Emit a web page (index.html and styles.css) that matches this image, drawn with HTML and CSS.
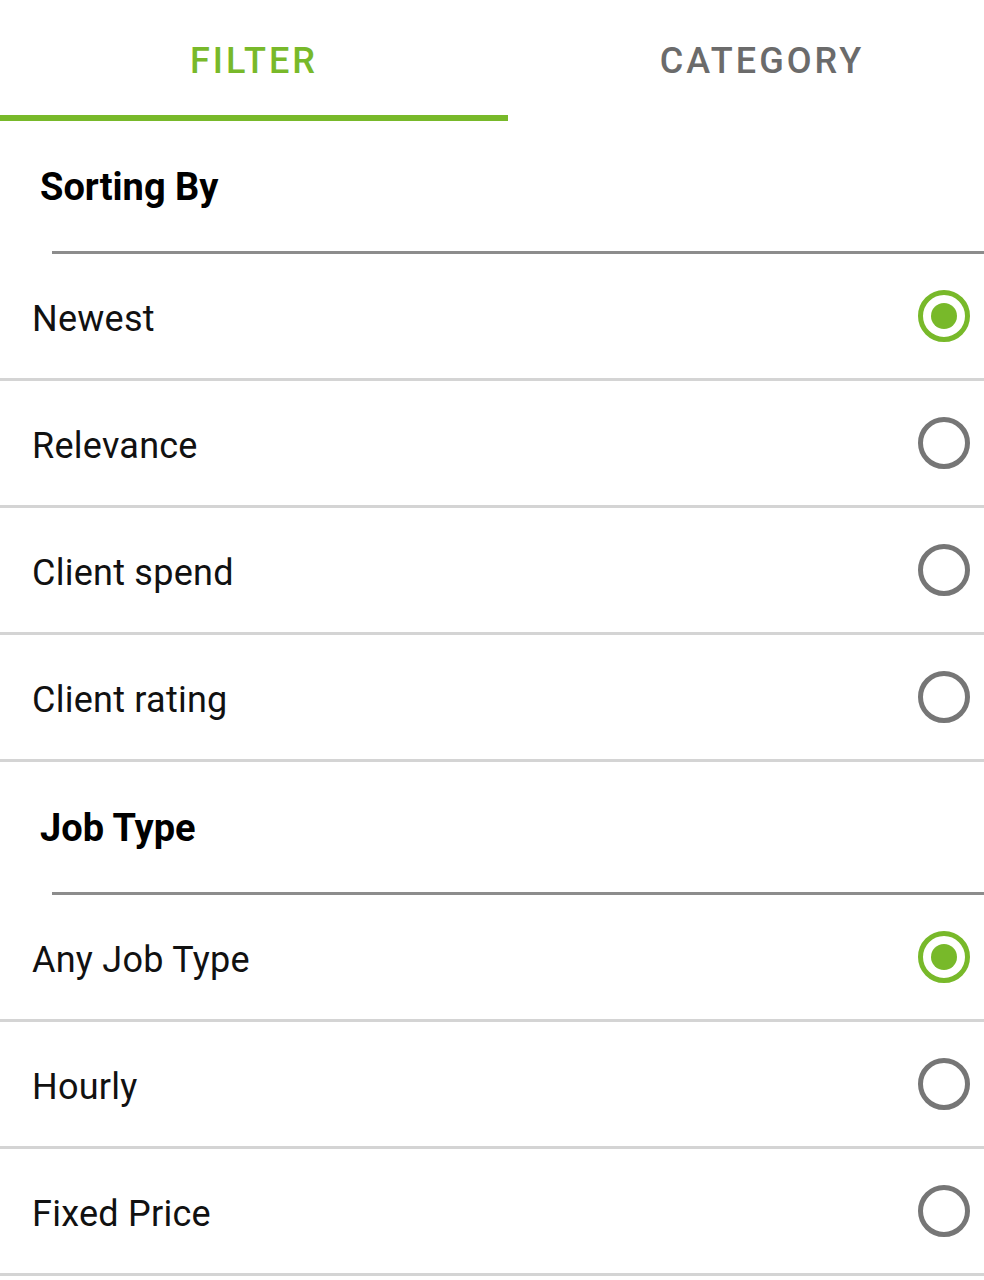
FILE: index.html
```html
<!DOCTYPE html>
<html>
<head>
<meta charset="utf-8">
<link rel="stylesheet" href="styles.css">
</head>
<body>
<div class="screen">
  <div class="tabs">
    <div class="tab active">FILTER</div>
    <div class="tab">CATEGORY</div>
  </div>

  <div class="section-title">Sorting By</div>
  <div class="section-rule"></div>
  <div class="row"><span class="label">Newest</span><span class="radio checked"></span></div>
  <div class="row"><span class="label">Relevance</span><span class="radio"></span></div>
  <div class="row"><span class="label">Client spend</span><span class="radio"></span></div>
  <div class="row"><span class="label">Client rating</span><span class="radio"></span></div>

  <div class="section-title">Job Type</div>
  <div class="section-rule"></div>
  <div class="row"><span class="label">Any Job Type</span><span class="radio checked"></span></div>
  <div class="row"><span class="label">Hourly</span><span class="radio"></span></div>
  <div class="row"><span class="label">Fixed Price</span><span class="radio"></span></div>
</div>
</body>
</html>
```

FILE: styles.css
```css
html, body {
  margin: 0;
  padding: 0;
  background: #ffffff;
}
body {
  font-family: Roboto, "Liberation Sans", sans-serif;
  overflow: hidden;
}
.screen {
  width: 984px;
  overflow: hidden;
}
.tabs {
  display: grid;
  grid-template-columns: 508px 508px;
  height: 121px;
}
.tab {
  display: flex;
  align-items: center;
  justify-content: center;
  padding-top: 7px;
  font-size: 36px;
  font-weight: 500;
  letter-spacing: 3px;
  color: #6b6b6b;
  box-sizing: border-box;
  border-bottom: 6px solid transparent;
}
.tab.active {
  color: #78b92a;
  border-bottom-color: #78b92a;
}
.section-title {
  height: 130px;
  display: flex;
  align-items: center;
  padding-left: 40px;
  padding-top: 2px;
  box-sizing: border-box;
  font-size: 38px;
  font-weight: 700;
  color: #000000;
}
.section-rule {
  margin-left: 52px;
  height: 3px;
  background: #8c8c8c;
}
.row {
  height: 127px;
  box-sizing: border-box;
  border-bottom: 3px solid #d4d4d4;
  display: flex;
  align-items: center;
  justify-content: space-between;
  padding: 0 14px 0 32px;
}
.label {
  font-size: 36px;
  letter-spacing: 0.25px;
  padding-top: 6px;
  color: #111111;
}
.radio {
  width: 52px;
  height: 52px;
  box-sizing: border-box;
  border-radius: 50%;
  border: 5px solid #767676;
  display: flex;
  align-items: center;
  justify-content: center;
}
.radio.checked {
  border-color: #78b92a;
}
.radio.checked::after {
  content: "";
  width: 26px;
  height: 26px;
  border-radius: 50%;
  background: #78b92a;
}
```
